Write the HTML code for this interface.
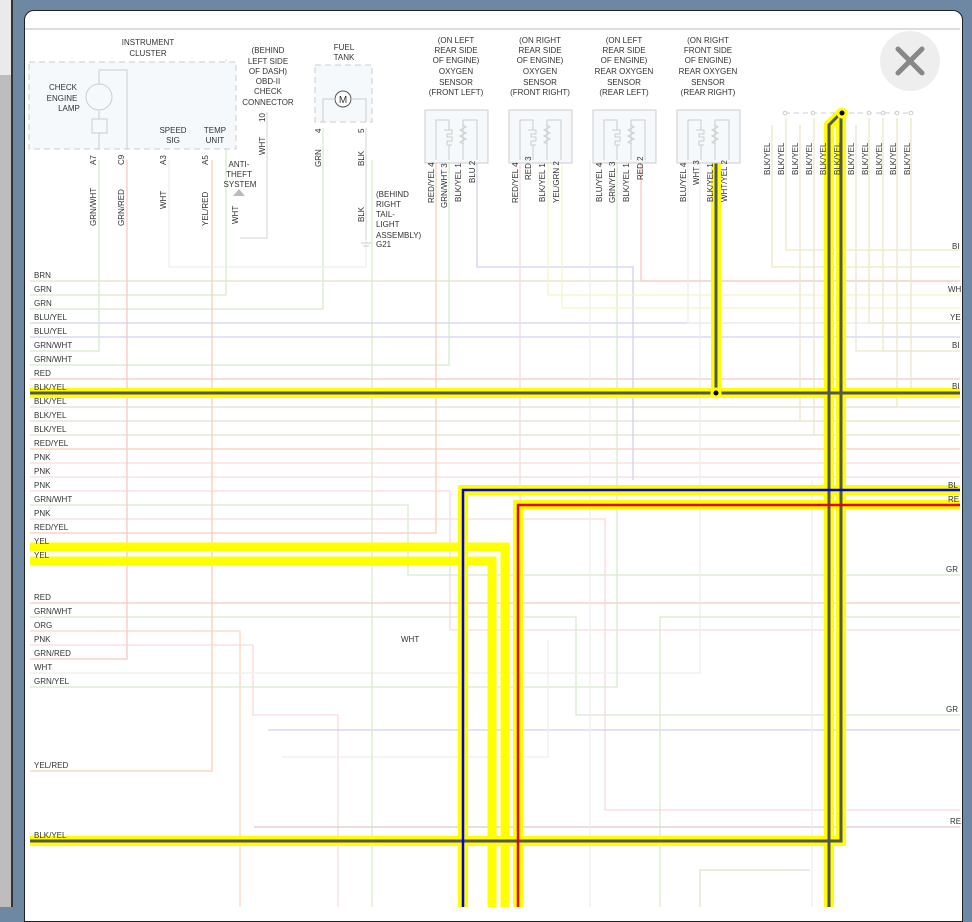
<!DOCTYPE html>
<html><head><meta charset="utf-8"><style>
html,body{margin:0;padding:0;width:972px;height:907px;overflow:hidden;background:#6e87a2;font-family:"Liberation Sans",sans-serif}
#sb{position:absolute;left:0;top:0;width:11px;height:907px;background:#bdbdbd}
#sb2{position:absolute;left:0;top:0;width:11px;height:75px;background:#eaeaea}
#sbl{position:absolute;left:11px;top:0;width:2px;height:907px;background:#333}
#panel{position:absolute;left:24px;top:10px;width:937px;height:910px;background:#fff;border:1px solid #222;border-radius:10px 10px 0 0}
svg{position:absolute;left:0;top:0}
text{font-family:"Liberation Sans",sans-serif;fill:#333}
</style></head><body>
<div id="sb"></div><div id="sb2"></div><div id="sbl"></div>
<div id="panel"></div>
<svg width="972" height="907" viewBox="0 0 972 907">
<defs><clipPath id="c"><rect x="25" y="29" width="935" height="878"/></clipPath></defs>
<line x1="25" y1="29" x2="960" y2="29" stroke="#ddd" stroke-width="2"/>
<g clip-path="url(#c)" fill="none" stroke-width="1.3">
<g stroke="#e8e0c8"><path d="M30 281H960"/></g>
<path d="M30 295H226V59" stroke="#d6eacc"/>
<path d="M30 309H323V128" stroke="#d6eacc"/>
<path d="M30 323H960" stroke="#d0d0f4"/>
<path d="M30 337H960" stroke="#d0d0f4"/>
<path d="M30 351H99V160" stroke="#d6eacc"/>
<path d="M30 365H449V160" stroke="#d6eacc"/>
<path d="M30 379H960" stroke="#f8c8c4"/>
<path d="M30 407H960" stroke="#e4e0d0"/>
<path d="M30 421H960" stroke="#e4e0d0"/>
<path d="M30 435H960" stroke="#e4e0d0"/>
<path d="M30 449H960" stroke="#fcccb8"/>
<path d="M30 463H960" stroke="#fadadc"/>
<path d="M30 477H960" stroke="#fadadc"/>
<path d="M30 491H450V630H960" stroke="#fadadc"/>
<path d="M30 505H408V575H960" stroke="#d6eacc"/>
<path d="M30 519H605V810H960" stroke="#fadadc"/>
<path d="M30 533H436V160" stroke="#fcccb8"/>
<path d="M30 603H960" stroke="#f8c8c4"/>
<path d="M30 617H576V715H960" stroke="#d6eacc"/>
<path d="M30 631H240V907" stroke="#fcd8c0"/>
<path d="M30 645H253V715H338V907" stroke="#fadadc"/>
<path d="M30 659H127V160" stroke="#f8c8c4"/>
<path d="M30 673H700V160" stroke="#eee"/>
<path d="M30 687H617V160" stroke="#d6eacc"/>
<path d="M30 771H212V160" stroke="#fcccb8"/>
<path d="M169 160V267H366V240" stroke="#eee"/>
<path d="M267 112V238H240" stroke="#ddd"/>
<path d="M366 128V240" stroke="#ddd"/>
<path d="M477 160V267H633V480" stroke="#d0d0f4"/>
<path d="M268 730H960" stroke="#d0d0f4"/>
<path d="M254 827H960" stroke="#e0c8c8"/>
<path d="M282 757H548V640" stroke="#eee"/>
<path d="M660 907V617H960" stroke="#d6eacc"/>
<path d="M548 160V295H960" stroke="#f4f4c8"/>
<path d="M562 160V308H960" stroke="#f4f4c8"/>
<path d="M641 160V281H960" stroke="#f8c8c4"/>
<path d="M688 160V323H960" stroke="#eee"/>
<path d="M772 125V267H960" stroke="#ece8c8"/>
<path d="M786 118V250H960" stroke="#ece8c8"/>
<path d="M800 125V421H960" stroke="#ece8c8"/>
<path d="M814 118V435H960" stroke="#ece8c8"/>
<path d="M856 125V351H960" stroke="#ece8c8"/>
<path d="M869 118V323H960" stroke="#ece8c8"/>
<path d="M883 118V351H960" stroke="#ece8c8"/>
<path d="M897 118V407H960" stroke="#ece8c8"/>
<path d="M911 118V393" stroke="#ece8c8"/>
<path d="M590 160V907" stroke="#eee"/>
<path d="M520 160V907" stroke="#fadadc"/>
<path d="M372 160V907" stroke="#d6eacc"/>
<path d="M812 907V480" stroke="#eee"/>
<path d="M700 907V870H810" stroke="#e4e0d0"/>

<g stroke="#ffff00" stroke-width="10">
<path d="M30 393H960"/>
<path d="M30 841H841V113"/>
<path d="M829 907V125L841 113"/>
<path d="M716 160V393"/>
<path d="M463 907V490H960"/>
<path d="M518 907V505H960"/>
</g>
<path d="M30 547H505V907" stroke="#ffff00" stroke-width="9"/>
<path d="M30 561H492V907" stroke="#ffff00" stroke-width="9"/>
<g stroke="#555" stroke-width="3">
<path d="M30 393H960"/>
<path d="M30 841H841V113"/>
<path d="M829 907V125L841 113"/>
<path d="M716 160V393"/>
</g>
<path d="M463 907V490H960" stroke="#0000ee" stroke-width="2.5"/>
<path d="M518 907V505H960" stroke="#ee0000" stroke-width="2.5"/>
</g>
<circle cx="716" cy="393" r="4" fill="#000" stroke="#ff0" stroke-width="3"/>
<circle cx="842" cy="113" r="4" fill="#000" stroke="#ff0" stroke-width="3"/>
<path d="M785 113H835M849 113H912" stroke="#ccc" stroke-dasharray="5 4"/>
<g fill="#fff" stroke="#ccc"><circle cx="785" cy="113" r="1.8"/><circle cx="813" cy="113" r="1.8"/><circle cx="869" cy="113" r="1.8"/><circle cx="883" cy="113" r="1.8"/><circle cx="897" cy="113" r="1.8"/><circle cx="911" cy="113" r="1.8"/></g>

<rect x="29" y="62" width="207" height="87" fill="#f6f9fc" stroke="#ccc" stroke-dasharray="6 4"/>
<circle cx="99" cy="97" r="13" fill="none" stroke="#ccc"/>
<rect x="92" y="119" width="15" height="14" fill="none" stroke="#ccc"/>
<path d="M99 84V70H127V149M99 110V119M99 133V149" stroke="#ccc" fill="none"/>
<g font-size="8" text-anchor="middle">
<text x="148" y="45">INSTRUMENT</text><text x="148" y="56">CLUSTER</text>
<text x="63" y="90">CHECK</text><text x="62" y="101">ENGINE</text><text x="69" y="111">LAMP</text>
<text x="173" y="133">SPEED</text><text x="173" y="143">SIG</text>
<text x="215" y="133">TEMP</text><text x="215" y="143">UNIT</text>
<text x="268" y="53">(BEHIND</text><text x="268" y="64">LEFT SIDE</text><text x="268" y="74">OF DASH)</text><text x="268" y="84">OBD-II</text><text x="268" y="94">CHECK</text><text x="268" y="105">CONNECTOR</text>
<text x="344" y="50">FUEL</text><text x="344" y="60">TANK</text>
<text x="344" y="76">FUEL</text><text x="344" y="87">PUMP</text>
<text x="239" y="167">ANTI-</text><text x="239" y="177">THEFT</text><text x="240" y="187">SYSTEM</text>
</g>
<path d="M233 196L239 189L245 196Z" fill="#bbb"/>
<rect x="315" y="65" width="57" height="57" fill="#f6f9fc" stroke="#ccc" stroke-dasharray="6 4"/>
<circle cx="343" cy="99" r="8" fill="#fff" stroke="#555"/>
<text x="343" y="103" font-size="10" text-anchor="middle" fill="#229">M</text>
<path d="M335 99H323V122M351 99H366V122" stroke="#ccc" fill="none"/>
<g font-size="8" text-anchor="start"><text x="376" y="197">(BEHIND</text><text x="376" y="207">RIGHT</text><text x="376" y="217">TAIL-</text><text x="376" y="227">LIGHT</text><text x="376" y="238">ASSEMBLY)</text><text x="376" y="247">G21</text></g>
<path d="M361 243H371M363 246H369" stroke="#ccc"/>

<g font-size="8" text-anchor="middle">
<text x="456" y="43">(ON LEFT</text><text x="456" y="53">REAR SIDE</text><text x="456" y="63">OF ENGINE)</text><text x="456" y="74">OXYGEN</text><text x="456" y="85">SENSOR</text><text x="456" y="95">(FRONT LEFT)</text>
<text x="540" y="43">(ON RIGHT</text><text x="540" y="53">REAR SIDE</text><text x="540" y="63">OF ENGINE)</text><text x="540" y="74">OXYGEN</text><text x="540" y="85">SENSOR</text><text x="540" y="95">(FRONT RIGHT)</text>
<text x="624" y="43">(ON LEFT</text><text x="624" y="53">REAR SIDE</text><text x="624" y="63">OF ENGINE)</text><text x="624" y="74">REAR OXYGEN</text><text x="624" y="85">SENSOR</text><text x="624" y="95">(REAR LEFT)</text>
<text x="708" y="43">(ON RIGHT</text><text x="708" y="53">FRONT SIDE</text><text x="708" y="63">OF ENGINE)</text><text x="708" y="74">REAR OXYGEN</text><text x="708" y="85">SENSOR</text><text x="708" y="95">(REAR RIGHT)</text>
</g>
<g fill="#f6f9fc" stroke="#ccc">
<rect x="425" y="110" width="63" height="53"/><rect x="509" y="110" width="63" height="53"/><rect x="593" y="110" width="63" height="53"/><rect x="677" y="110" width="63" height="53"/>
</g>
<g fill="none" stroke="#ccc" id="s1">
<path d="M436 160V120H449V130M449 145V160M444 130h8v4h-5v3h5v4h-5v4h5M463 160V120M463 125l3 2-6 3 6 3-6 3 6 3-6 3 3 2V160M463 120H477V160"/>
</g>
<use href="#s1" x="84"/><use href="#s1" x="168"/><use href="#s1" x="252"/>

<g font-size="8">
<g transform="rotate(-90)">
<text x="-165" y="96">A7</text><text x="-165" y="124">C9</text><text x="-165" y="166">A3</text><text x="-165" y="208">A5</text>
<text x="-226" y="96">GRN/WHT</text><text x="-226" y="124">GRN/RED</text><text x="-209" y="166">WHT</text><text x="-226" y="208">YEL/RED</text>
<text x="-224" y="238">WHT</text><text x="-122" y="265">10</text><text x="-155" y="265">WHT</text>
<text x="-133" y="321">4</text><text x="-167" y="321">GRN</text><text x="-133" y="364">5</text><text x="-166" y="364">BLK</text><text x="-222" y="364">BLK</text>
<text x="-203" y="434">RED/YEL 4</text><text x="-208" y="447">GRN/WHT 3</text><text x="-202" y="461">BLK/YEL 1</text><text x="-183" y="475">BLU 2</text>
<text x="-203" y="518">RED/YEL 4</text><text x="-180" y="531">RED 3</text><text x="-202" y="545">BLK/YEL 1</text><text x="-203" y="559">YEL/GRN 2</text>
<text x="-202" y="602">BLU/YEL 4</text><text x="-203" y="615">GRN/YEL 3</text><text x="-202" y="629">BLK/YEL 1</text><text x="-180" y="643">RED 2</text>
<text x="-202" y="686">BLU/YEL 4</text><text x="-185" y="699">WHT 3</text><text x="-202" y="713">BLK/YEL 1</text><text x="-202" y="727">WHT/YEL 2</text>
<text x="-175" y="770">BLK/YEL</text><text x="-175" y="784">BLK/YEL</text><text x="-175" y="798">BLK/YEL</text><text x="-175" y="812">BLK/YEL</text><text x="-175" y="826">BLK/YEL</text><text x="-175" y="840">BLK/YEL</text><text x="-175" y="854">BLK/YEL</text><text x="-175" y="868">BLK/YEL</text><text x="-175" y="882">BLK/YEL</text><text x="-175" y="896">BLK/YEL</text><text x="-175" y="910">BLK/YEL</text>
</g>
</g>

<g font-size="8">
<text x="34" y="278">BRN</text><text x="34" y="292">GRN</text><text x="34" y="306">GRN</text><text x="34" y="320">BLU/YEL</text><text x="34" y="334">BLU/YEL</text><text x="34" y="348">GRN/WHT</text><text x="34" y="362">GRN/WHT</text><text x="34" y="376">RED</text><text x="34" y="390">BLK/YEL</text><text x="34" y="404">BLK/YEL</text><text x="34" y="418">BLK/YEL</text><text x="34" y="432">BLK/YEL</text><text x="34" y="446">RED/YEL</text><text x="34" y="460">PNK</text><text x="34" y="474">PNK</text><text x="34" y="488">PNK</text><text x="34" y="502">GRN/WHT</text><text x="34" y="516">PNK</text><text x="34" y="530">RED/YEL</text><text x="34" y="544">YEL</text><text x="34" y="558">YEL</text>
<text x="34" y="600">RED</text><text x="34" y="614">GRN/WHT</text><text x="34" y="628">ORG</text><text x="34" y="642">PNK</text><text x="34" y="656">GRN/RED</text><text x="34" y="670">WHT</text><text x="34" y="684">GRN/YEL</text><text x="34" y="768">YEL/RED</text><text x="34" y="838">BLK/YEL</text>
<text x="401" y="642">WHT</text>
<text x="952" y="249">BI</text><text x="948" y="292">WH</text><text x="950" y="320">YE</text><text x="952" y="348">BI</text><text x="952" y="389">BI</text><text x="948" y="488">BL</text><text x="948" y="502">RE</text><text x="946" y="572">GR</text><text x="946" y="712">GR</text><text x="950" y="824">RE</text>
</g>

<circle cx="910" cy="61" r="30" fill="#eee"/>
<path d="M898 49L922 73M922 49L898 73" stroke="#888" stroke-width="5" stroke-linecap="round"/>
</svg>
</body></html>
